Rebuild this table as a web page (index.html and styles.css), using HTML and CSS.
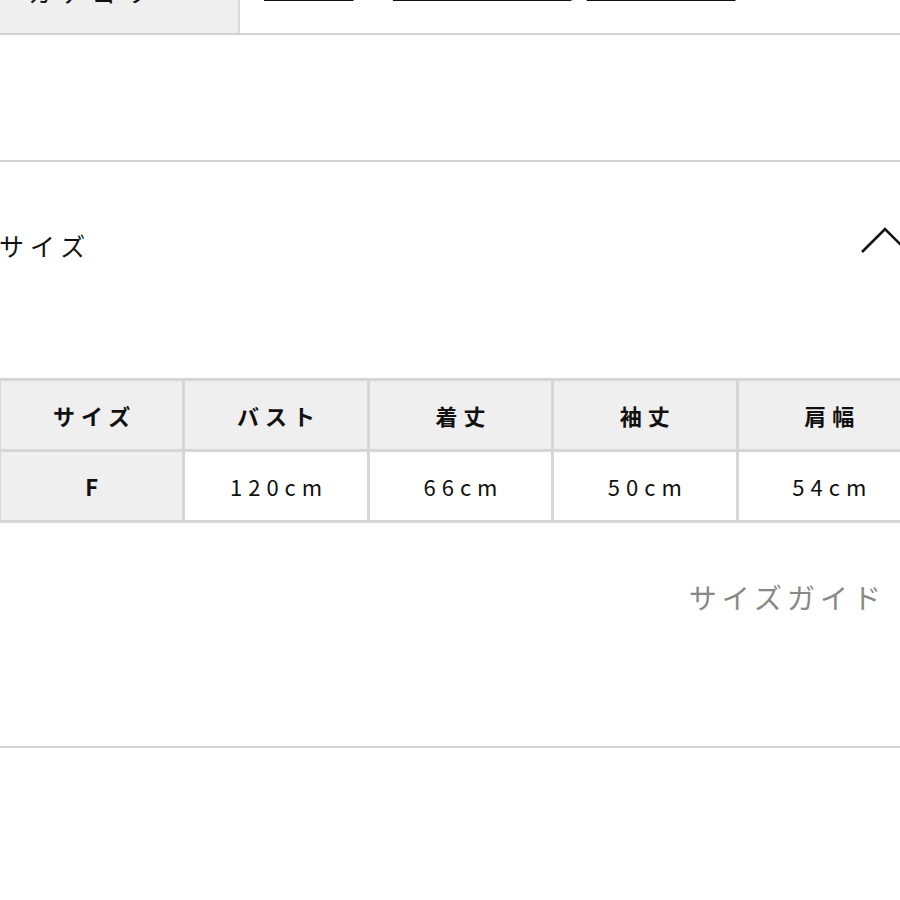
FILE: index.html
```html
<!DOCTYPE html>
<html lang="ja">
<head>
    <meta charset="utf-8">
    <title>サイズ</title>
    <link rel="stylesheet" href="styles.css">
</head>
<body>
    <div class="page">
        <div class="spec-row">
            <div class="spec-label">カテゴリ</div>
            <div class="spec-value">
                <a href="#">メンズ</a>
                <a href="#" class="gap">カーディガン</a>/<a href="#">ジャケット</a>
            </div>
        </div>

        <div class="accordion">
            <div class="accordion-head">
                <span class="accordion-title">サイズ</span>
                <svg class="chevron" width="60" height="40" viewBox="0 0 60 40">
                    <polyline points="2,25 25,2 48,25" fill="none" stroke="#111" stroke-width="2.6"/>
                </svg>
            </div>

            <table class="size-table">
                <tr>
                    <th>サイズ</th>
                    <th>バスト</th>
                    <th>着丈</th>
                    <th>袖丈</th>
                    <th>肩幅</th>
                </tr>
                <tr>
                    <th class="row-head">F</th>
                    <td>120cm</td>
                    <td>66cm</td>
                    <td>50cm</td>
                    <td>54cm</td>
                </tr>
            </table>

            <div class="guide"><a href="#">サイズガイド</a></div>
        </div>
    </div>
</body>
</html>
```

FILE: styles.css
```css
body { margin: 0; background: #fff; font-family: "Noto Sans CJK JP", "Noto Sans", sans-serif; color: #111; overflow: hidden; }
.page { width: 900px; overflow: hidden; }

.spec-row { display: flex; height: 73px; margin-top: -40px; border-bottom: 2px solid #d2d2d2; }
.spec-label { width: 210px; padding-left: 28px; background: #efefef; border-right: 2px solid #dadada; font-size: 24px; letter-spacing: 8px; line-height: 64px; }
.spec-value { flex: 1; padding-left: 24px; font-size: 24px; letter-spacing: 6px; line-height: 51px; white-space: nowrap; }
.spec-value a { color: #111; text-decoration: underline; text-decoration-thickness: 3px; }
.spec-value .gap { margin-left: 28px; }

.accordion { margin-top: 125px; border-top: 2px solid #d2d2d2; border-bottom: 2px solid #d2d2d2; padding-bottom: 129px; }
.accordion-head { display: flex; justify-content: space-between; align-items: center; height: 166px; }
.accordion-title { font-size: 25px; letter-spacing: 6px; margin-left: -1px; }
.chevron { margin-right: -20px; margin-top: 4px; }

.size-table { width: 925px; margin-left: -2px; margin-top: 50px; table-layout: fixed; border-collapse: collapse; border: 3px solid #d6d6d6; }
.size-table th, .size-table td { border: 3px solid #d6d6d6; height: 68px; padding: 0; text-align: center; font-size: 22px; letter-spacing: 6px; text-indent: 6px; }
.size-table th { background: #efefef; font-weight: bold; }
.size-table td { font-weight: normal; }
.size-table .row-head { font-weight: bold; }

.guide { text-align: right; padding: 54px 14px 0 0; font-size: 28px; letter-spacing: 5px; }
.guide a { color: #888; text-decoration: none; }
```
